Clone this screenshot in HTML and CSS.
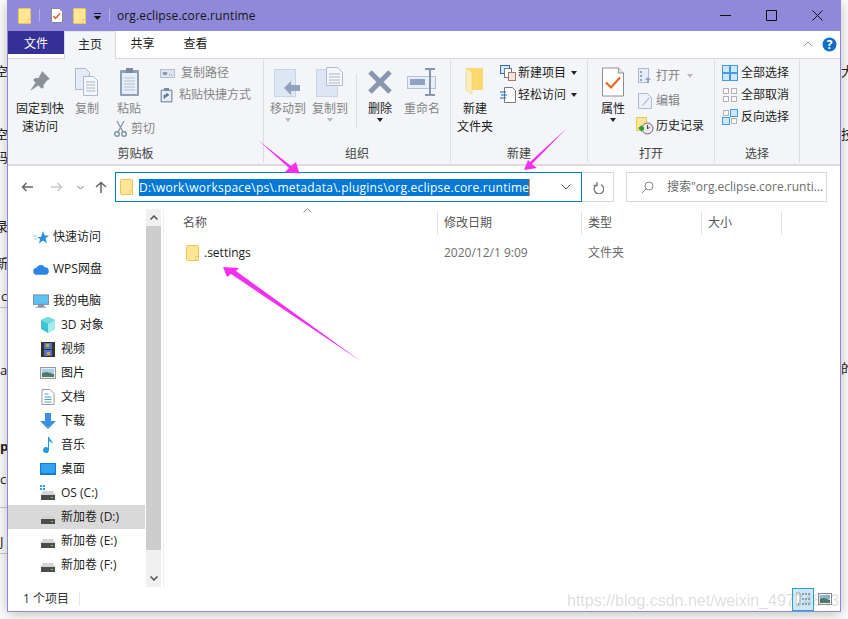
FILE: index.html
```html
<!DOCTYPE html>
<html lang="zh-CN">
<head>
  <meta charset="UTF-8">
  <title>org.eclipse.core.runtime</title>
  <link rel="stylesheet" href="styles.css">
</head>
<body>

<svg class="sprite" width="0" height="0">
  <symbol id="folder" viewBox="0 0 13 16">
    <path d="M.5 1.500a1 1 0 0 1 1-1h10a1 1 0 0 1 1 1v13a1 1 0 0 1-1 1h-10a1 1 0 0 1-1-1z" fill="#ffe596" stroke="#ecc552"/>
    <path d="M10 15.500v-4h2.500v4z" fill="#fff3c4" stroke="#ecc552"/>
  </symbol>
  <symbol id="drive" viewBox="0 0 16 16">
    <path d="M3 6h10l2 4H1z" fill="#d4d4d4"/>
    <rect x="1" y="10" width="14" height="5" fill="#4d4d4d"/>
    <rect x="11" y="12" width="2" height="1" fill="#5fe05f"/>
  </symbol>
</svg>

<!-- bits of the page behind the explorer window -->
<div class="backdrop">
  <span class="bit" style="left:-5px;top:62px">空</span>
  <span class="bit" style="left:-5px;top:125px">空</span>
  <span class="bit" style="left:-5px;top:148px">码</span>
  <span class="bit" style="left:-5px;top:217px">录</span>
  <span class="bit" style="left:-5px;top:254px">新</span>
  <span class="bit" style="left:1px;top:287px">c</span>
  <span class="bit" style="left:0;top:361px">a</span>
  <span class="bit bit-bold" style="left:0;top:437px">p</span>
  <span class="bit" style="left:0;top:470px">ce</span>
  <span class="bit" style="left:0;top:532px">J</span>
  <span class="bit" style="left:841px;top:62px">大</span>
  <span class="bit" style="left:841px;top:125px">技</span>
  <span class="bit" style="left:841px;top:359px">的</span>
  <i class="rule" style="top:307px"></i>
  <i class="rule" style="top:507px"></i>
  <i class="rule" style="top:553px"></i>
</div>

<div class="window">

  <div class="titlebar">
    <svg class="qa-icon" width="13" height="16"><use href="#folder"/></svg>
    <i class="qa-sep"></i>
    <svg class="qa-doc" width="12" height="15" viewBox="0 0 12 15">
      <path d="M.5.500h8l3 3v11H.5z" fill="#fff" stroke="#8a8a8a"/>
      <path d="M2.500 8l2 2.500 4.500-5" fill="none" stroke="#e8562a" stroke-width="1.400"/>
    </svg>
    <svg class="qa-folder" width="13" height="16"><use href="#folder"/></svg>
    <svg class="qa-drop" width="9" height="8" viewBox="0 0 9 8">
      <path d="M1 0h7v1H1zM1 3h7L4.500 7z" fill="#111"/>
    </svg>
    <i class="qa-sep"></i>
    <span class="title-text">org.eclipse.core.runtime</span>
    <div class="win-btns">
      <svg width="11" height="11" viewBox="0 0 11 11"><path d="M0 5.500h11" stroke="#111"/></svg>
      <svg width="11" height="11" viewBox="0 0 11 11"><path d="M.5.500h10v10H.5z" fill="none" stroke="#111"/></svg>
      <svg width="11" height="11" viewBox="0 0 11 11"><path d="M.5.500l10 10M10.500.500l-10 10" stroke="#111"/></svg>
    </div>
  </div>

  <div class="tabs">
    <span class="tab tab-file">文件</span>
    <span class="tab tab-active">主页</span>
    <span class="tab">共享</span>
    <span class="tab">查看</span>
    <svg class="tabs-fold" width="10" height="6" viewBox="0 0 10 6"><path d="M1 5l4-4 4 4" fill="none" stroke="#9b9b9b"/></svg>
    <svg class="tabs-help" width="15" height="15" viewBox="0 0 15 15">
      <circle cx="7.500" cy="7.500" r="7" fill="#1170c6"/>
      <text x="7.500" y="12" class="help-mark">?</text>
    </svg>
  </div>

  <div class="ribbon">

    <div class="group group-clip">
      <div class="group-body">
        <div class="big big-pin">
          <svg width="24" height="30" viewBox="0 0 24 30">
            <path d="M14 4l8 8-2.500 1-4 5v3l-2 .5L5 13l2.500-2h3L13 6.500z" fill="#8b9198"/>
            <path d="M8 15l-6 9 9-6z" fill="#8b9198"/>
          </svg>
          <span class="label dark">固定到快<br>速访问</span>
        </div>
        <div class="big big-copy off">
          <svg width="26" height="30" viewBox="0 0 26 30">
            <path d="M1.500 1.500h10l4 4v17h-14z" fill="#e6ecf5" stroke="#a9bad2"/>
            <path d="M9.500 9.500h10l4 4v15h-14z" fill="#f5f7fb" stroke="#a9bad2"/>
            <path d="M12 15h9M12 18h9M12 21h9M12 24h9" stroke="#a9b4c4"/>
          </svg>
          <span class="label">复制</span>
        </div>
        <div class="clip-col">
          <div class="big big-paste off">
            <svg width="21" height="30" viewBox="0 0 21 30">
              <rect x="1" y="3" width="19" height="26" rx="1" fill="#8fa0b6"/>
              <rect x="3" y="6" width="15" height="21" fill="#e8eef7"/>
              <rect x="7" y="1" width="7" height="5" fill="#7b8a9e"/>
              <path d="M5 11h11M5 14h11M5 17h11M5 20h11M5 23h11" stroke="#b5c2d3"/>
            </svg>
            <span class="label">粘贴</span>
          </div>
          <div class="small off small-cut">
            <svg width="13" height="16" viewBox="0 0 13 16">
              <path d="M3 0l6 11M10 0L4 11" stroke="#8a97a8" stroke-width="1.300" fill="none"/>
              <circle cx="3" cy="13" r="2.300" fill="none" stroke="#7f93ad" stroke-width="1.400"/>
              <circle cx="10" cy="13" r="2.300" fill="none" stroke="#7f93ad" stroke-width="1.400"/>
            </svg>
            <span>剪切</span>
          </div>
        </div>
        <div class="small-col small-col-clip">
          <div class="small off">
            <svg width="15" height="9" viewBox="0 0 15 9">
              <rect x=".5" y=".5" width="14" height="8" fill="#dfe6f2" stroke="#b4c0d2"/>
              <path d="M3 3l1 3 1-3 1 3 1-3M9 6h1M11 6h1" stroke="#66788f" fill="none" stroke-width=".8"/>
            </svg>
            <span>复制路径</span>
          </div>
          <div class="small off">
            <svg width="13" height="16" viewBox="0 0 13 16">
              <rect x=".5" y="2.500" width="12" height="13" rx="1" fill="#8d9fb6"/>
              <rect x="2" y="4" width="9" height="10" fill="#e9eef6"/>
              <rect x="4" y="1" width="5" height="3" fill="#7b8a9e"/>
              <path d="M4 12V8h4M6 6l3 2-3 2" fill="#5d7391" stroke="#5d7391" stroke-width=".6"/>
            </svg>
            <span>粘贴快捷方式</span>
          </div>
        </div>
      </div>
      <div class="group-label">剪贴板</div>
    </div>

    <div class="group group-org">
      <div class="group-body">
        <div class="big big-org off">
          <svg width="28" height="30" viewBox="0 0 28 30">
            <rect x=".5" y="2.500" width="21" height="27" fill="#dde6f3" stroke="#c8d5e8"/>
            <path d="M10 21l7-7v4h9v6h-9v4z" fill="#90a3bd"/>
          </svg>
          <span class="label">移动到</span>
          <i class="caret caret-off"></i>
        </div>
        <div class="big big-org off">
          <svg width="28" height="30" viewBox="0 0 28 30">
            <rect x=".5" y="2.500" width="21" height="27" fill="#dde6f3" stroke="#c8d5e8"/>
            <path d="M10.500.500h11l5 5v13h-16z" fill="#f5f7fb" stroke="#a9bad2"/>
            <path d="M13 7h11M13 10h11M13 13h11M13 16h11" stroke="#a9b4c4"/>
          </svg>
          <span class="label">复制到</span>
          <i class="caret caret-off"></i>
        </div>
        <i class="inner-sep"></i>
        <div class="big big-del">
          <svg width="26" height="26" viewBox="0 0 26 26">
            <path d="M3 3l20 20M23 3L3 23" stroke="#8896ad" stroke-width="5"/>
          </svg>
          <span class="label dark">删除</span>
          <i class="caret"></i>
        </div>
        <div class="big big-rename off">
          <svg width="30" height="28" viewBox="0 0 30 28">
            <rect x=".5" y="8.500" width="28" height="12" fill="#e8eef7" stroke="#b2c1d8"/>
            <rect x="3" y="11" width="15" height="6" fill="#8fa2bf"/>
            <path d="M18 1h4l1 1 1-1h4M23 2v24M18 27h4l1-1 1 1h4" fill="none" stroke="#8795ad" stroke-width="2"/>
          </svg>
          <span class="label">重命名</span>
        </div>
      </div>
      <div class="group-label">组织</div>
    </div>

    <div class="group group-new">
      <div class="group-body">
        <div class="big big-newfolder">
          <svg width="20" height="30" viewBox="0 0 20 30">
            <path d="M1 1h17v22H1z" fill="#fbd96f"/>
            <path d="M1 1l6 4v22l-6-4z" fill="#fff0ba" stroke="#efd27a" stroke-width=".6"/>
          </svg>
          <span class="label dark">新建<br>文件夹</span>
        </div>
        <div class="small-col small-col-new">
          <div class="small">
            <svg width="16" height="16" viewBox="0 0 16 16">
              <rect x=".5" y=".5" width="9" height="8" fill="#dbe8f6" stroke="#2a6fb8"/>
              <rect x="4.500" y="3.500" width="7" height="9" fill="#fff" stroke="#6d7c8f"/>
              <rect x="8.500" y="7.500" width="7" height="8" fill="#f6e3da" stroke="#a07b6b"/>
            </svg>
            <span>新建项目</span>
            <i class="caret caret-side"></i>
          </div>
          <div class="small">
            <svg width="16" height="16" viewBox="0 0 16 16">
              <path d="M4.500.5h8l3 3v12h-11z" fill="#fff" stroke="#7b7b7b"/>
              <path d="M0 5h6M1 8h6M0 11h6" stroke="#1268bc" stroke-width="1.200"/>
            </svg>
            <span>轻松访问</span>
            <i class="caret caret-side"></i>
          </div>
        </div>
      </div>
      <div class="group-label">新建</div>
    </div>

    <div class="group group-open">
      <div class="group-body">
        <div class="big big-prop">
          <svg width="22" height="29" viewBox="0 0 22 29">
            <path d="M.5.500h16l5 5v23H.5z" fill="#fff" stroke="#8e8e8e"/>
            <path d="M16.500.500v5h5" fill="#e5e5e5" stroke="#8e8e8e"/>
            <path d="M4 15l5 5 9-10" fill="none" stroke="#f0641e" stroke-width="2.200"/>
          </svg>
          <span class="label dark">属性</span>
          <i class="caret"></i>
        </div>
        <div class="open-col">
          <div class="small off">
            <svg width="14" height="16" viewBox="0 0 14 16">
              <rect x=".5" y=".5" width="10" height="14" fill="#e7edf6" stroke="#a9bad2"/>
              <path d="M2 3h2v2H2zM2 7h2v2H2zM2 11h2v2H2z" fill="#8fa2bf"/>
              <path d="M10 9l-3 3h2v3h2v-3h2z" fill="#8fa2bf"/>
            </svg>
            <span>打开</span>
            <i class="caret caret-side caret-off"></i>
          </div>
          <div class="small off">
            <svg width="14" height="16" viewBox="0 0 14 16">
              <path d="M.5.500h9l4 4v11H.5z" fill="#eef2f8" stroke="#a9bad2"/>
              <path d="M4 12l7-8 1 1-7 8z" fill="#b6c5da"/>
            </svg>
            <span>编辑</span>
          </div>
          <div class="small small-hist">
            <svg width="18" height="18" viewBox="0 0 18 18">
              <path d="M.5.500h10v13H.5z" fill="#ffe596" stroke="#ecc552"/>
              <circle cx="11.500" cy="11.500" r="5.500" fill="#e8e8e8" stroke="#666"/>
              <path d="M11.500 8v4l2-2" fill="none" stroke="#444"/>
              <path d="M2 11l4-3v2h2v3H6v2z" fill="#2e9e3a"/>
            </svg>
            <span>历史记录</span>
          </div>
        </div>
      </div>
      <div class="group-label">打开</div>
    </div>

    <div class="group group-select">
      <div class="group-body">
        <div class="small-col small-col-select">
          <div class="small">
            <svg width="16" height="16" viewBox="0 0 16 16">
              <rect x=".5" y=".5" width="15" height="15" fill="#cfe6fb" stroke="#3f9ce8"/>
              <path d="M8 0v16M0 8h16" stroke="#3f9ce8" stroke-width="2"/>
            </svg>
            <span>全部选择</span>
          </div>
          <div class="small">
            <svg width="16" height="16" viewBox="0 0 16 16" fill="#fafafa" stroke="#b4b4b4">
              <rect x="1.500" y="1.500" width="5" height="5"/><rect x="9.500" y="1.500" width="5" height="5"/>
              <rect x="1.500" y="9.500" width="5" height="5"/><rect x="9.500" y="9.500" width="5" height="5"/>
            </svg>
            <span>全部取消</span>
          </div>
          <div class="small">
            <svg width="16" height="16" viewBox="0 0 16 16">
              <rect x="1.500" y="1.500" width="5" height="5" fill="#fafafa" stroke="#b4b4b4"/>
              <rect x="8.500" y=".5" width="7" height="7" fill="#cfe6fb" stroke="#3f9ce8"/>
              <rect x=".5" y="8.500" width="7" height="7" fill="#cfe6fb" stroke="#3f9ce8"/>
              <rect x="9.500" y="9.500" width="5" height="5" fill="#fafafa" stroke="#b4b4b4"/>
            </svg>
            <span>反向选择</span>
          </div>
        </div>
      </div>
      <div class="group-label">选择</div>
    </div>

  </div>

  <div class="addressbar">
    <svg class="nav-back" width="12" height="10" viewBox="0 0 12 10"><path d="M12 5H1.500M5.500 1l-4 4 4 4" fill="none" stroke="#666" stroke-width="1.500"/></svg>
    <svg class="nav-forward" width="12" height="10" viewBox="0 0 12 10"><path d="M0 5h10.500M6.500 1l4 4-4 4" fill="none" stroke="#c9c9c9" stroke-width="1.500"/></svg>
    <svg class="nav-recent" width="7" height="5" viewBox="0 0 7 5"><path d="M.5 1l3 3 3-3" fill="none" stroke="#777"/></svg>
    <svg class="nav-up" width="12" height="12" viewBox="0 0 12 12"><path d="M6 12V1.500M1 6l5-4.500L11 6" fill="none" stroke="#666" stroke-width="1.500"/></svg>
    <div class="address">
      <svg width="13" height="16"><use href="#folder"/></svg>
      <span class="address-text">D:\work\workspace\ps\.metadata\.plugins\org.eclipse.core.runtime</span>
      <svg class="address-drop" width="10" height="6" viewBox="0 0 10 6"><path d="M.5.500L5 5 9.500.500" fill="none" stroke="#555"/></svg>
    </div>
    <div class="refresh">
      <svg width="12" height="13" viewBox="0 0 12 13"><path d="M8 3.200a4.800 4.800 0 1 1-4.500.2M4 .5v3.500H.5" transform="translate(1 .5)" fill="none" stroke="#777" stroke-width="1.300"/></svg>
    </div>
    <div class="search">
      <svg width="13" height="13" viewBox="0 0 13 13"><circle cx="8" cy="5" r="4" fill="none" stroke="#888"/><path d="M5 8l-4 4" stroke="#888"/></svg>
      <span>搜索"org.eclipse.core.runti...</span>
    </div>
  </div>

  <div class="main">
    <div class="sidebar">
      <div class="tree">
        <div class="tree-row tree-top">
          <svg width="16" height="15" viewBox="0 0 16 15"><path d="M10 1l1.500 4.500H16l-3.500 3 1.500 5-4-3-4 3 1-4.500-3-2h4z" fill="#2c8fe0"/><path d="M0 6h4M1 9h3" stroke="#9cc8ee"/></svg>
          <span>快速访问</span>
        </div>
        <div class="tree-row tree-top tree-wps">
          <svg width="17" height="13" viewBox="0 0 17 13"><path d="M4 12a3.500 3.500 0 0 1-.5-7A5 5 0 0 1 12.500 4 4 4 0 0 1 13 12z" fill="#2c85e6"/></svg>
          <span>WPS网盘</span>
        </div>
        <div class="tree-row tree-top tree-pc">
          <svg width="17" height="15" viewBox="0 0 17 15"><rect x=".5" y=".5" width="16" height="10" fill="#5cc2f5" stroke="#7d8a96"/><path d="M6 11h5v2H6zM3 13.500h11" stroke="#7d8a96" fill="#9aa6b0"/></svg>
          <span>我的电脑</span>
        </div>
        <div class="tree-row">
          <svg width="16" height="16" viewBox="0 0 16 16"><path d="M8 0l7 3v9l-7 4-7-4V3z" fill="#3fc4cf"/><path d="M8 7l7-4v9l-7 4z" fill="#a5ecef"/><path d="M8 7L1 3l7-3 7 3z" fill="#74dbe2"/></svg>
          <span>3D 对象</span>
        </div>
        <div class="tree-row">
          <svg width="14" height="15" viewBox="0 0 14 15"><rect width="14" height="15" fill="#333"/><rect x="3" y="1" width="8" height="6" fill="#4f74c9"/><rect x="3" y="8" width="8" height="6" fill="#4f74c9"/><path d="M5 2h3v3H5zM6 10h3v3H6z" fill="#d9a52a"/></svg>
          <span>视频</span>
        </div>
        <div class="tree-row">
          <svg width="16" height="12" viewBox="0 0 16 12"><rect x=".5" y=".5" width="15" height="11" fill="#e8eef2" stroke="#9a9a9a"/><path d="M2 2h12v4H2z" fill="#a9cfe6"/><path d="M2 6l5-1 7 2v3H2z" fill="#4f7b6a"/></svg>
          <span>图片</span>
        </div>
        <div class="tree-row">
          <svg width="13" height="16" viewBox="0 0 13 16"><path d="M.5.500h8l4 4v11H.5z" fill="#fff" stroke="#9a9a9a"/><path d="M3 5h4M3 8h7M3 10.500h7M3 13h7" stroke="#4d9ad6"/></svg>
          <span>文档</span>
        </div>
        <div class="tree-row">
          <svg width="16" height="16" viewBox="0 0 16 16"><path d="M5 0h6v8h5l-8 8-8-8h5z" fill="#3d8ee0"/></svg>
          <span>下载</span>
        </div>
        <div class="tree-row">
          <svg width="16" height="16" viewBox="0 0 16 16"><path d="M8 0h1.200c.3 3 3.800 3.500 3.300 7-.8-2-2.500-2.500-3.500-2.800V13a3 3 0 1 1-1-2.200z" fill="#1d9be6"/></svg>
          <span>音乐</span>
        </div>
        <div class="tree-row">
          <svg width="16" height="12" viewBox="0 0 16 12"><rect width="16" height="12" fill="#1878d0"/><path d="M1 1h14v9H1z" fill="#2fa3ee"/></svg>
          <span>桌面</span>
        </div>
        <div class="tree-row">
          <svg width="16" height="16" viewBox="0 0 16 16">
            <path d="M0 0h2v2H0zM3 0h2v2H3zM0 3h2v2H0zM3 3h2v2H3z" fill="#1da1f2"/>
            <use href="#drive"/>
          </svg>
          <span>OS (C:)</span>
        </div>
        <div class="tree-row tree-selected">
          <svg width="16" height="16"><use href="#drive"/></svg>
          <span>新加卷 (D:)</span>
        </div>
        <div class="tree-row">
          <svg width="16" height="16"><use href="#drive"/></svg>
          <span>新加卷 (E:)</span>
        </div>
        <div class="tree-row">
          <svg width="16" height="16"><use href="#drive"/></svg>
          <span>新加卷 (F:)</span>
        </div>
      </div>
      <div class="scrollbar">
        <div class="scroll-btn"><svg width="8" height="5" viewBox="0 0 8 5"><path d="M.5 4.500L4 1l3.500 3.500" fill="none" stroke="#505050" stroke-width="1.500"/></svg></div>
        <div class="scroll-thumb"></div>
        <div class="scroll-track"></div>
        <div class="scroll-btn"><svg width="8" height="5" viewBox="0 0 8 5"><path d="M.5.500L4 4 7.500.500" fill="none" stroke="#505050" stroke-width="1.500"/></svg></div>
      </div>
    </div>

    <div class="files">
      <svg class="sort-mark" width="9" height="5" viewBox="0 0 9 5"><path d="M.5 4.500l4-4 4 4" fill="none" stroke="#888"/></svg>
      <div class="file-head">
        <span class="col col-name">名称</span>
        <span class="col col-date">修改日期</span>
        <span class="col col-type">类型</span>
        <span class="col col-size">大小</span>
      </div>
      <div class="file-row">
        <span class="col col-name file-name">
          <svg width="13" height="16"><use href="#folder"/></svg>
          .settings
        </span>
        <span class="col col-date">2020/12/1 9:09</span>
        <span class="col col-type">文件夹</span>
        <span class="col col-size"></span>
      </div>
    </div>
  </div>

  <div class="statusbar">
    <span class="status-count">1 个项目</span>
    <i class="status-sep"></i>
    <div class="view-btns">
      <div class="view-btn view-on">
        <svg width="15" height="14" viewBox="0 0 15 14">
          <path d="M0 1h4v12H0z" fill="#fff" stroke="#777" stroke-width=".6"/>
          <path d="M2 11h1v1H2z" fill="#d12a2a"/>
          <path d="M6 2h9M6 7h9M6 12h9" stroke="#555" stroke-dasharray="2 1"/>
        </svg>
      </div>
      <div class="view-btn">
        <svg width="14" height="12" viewBox="0 0 14 12">
          <rect x=".5" y=".5" width="13" height="11" fill="#f4f6f8" stroke="#888"/>
          <path d="M2 2h10v4H2z" fill="#8ab6d8"/>
          <path d="M2 6l4-1 6 2v3H2z" fill="#46705e"/>
        </svg>
      </div>
    </div>
  </div>

</div>

<span class="watermark">https://blog.csdn.net/weixin_49774843</span>

<svg class="arrows" width="848" height="619" viewBox="0 0 848 619">
  <path d="M258 140L291 166 296 162 299.500 173.500 285 172 289 168z"/>
  <path d="M567 128L532 164 537 168 524 170 528 160 530 162z"/>
  <path d="M362 362L236 271 239 268 223 267 227 277 231 274z"/>
</svg>

</body>
</html>
```

FILE: styles.css
```css
* {
  box-sizing: border-box;
}

html, body {
  margin: 0;
  height: 100%;
  overflow: hidden;
}

body {
  position: relative;
  background-color: #fff;
  font-family: "Open Sans", "Noto Sans CJK SC", sans-serif;
  font-size: 12px;
  line-height: 18px;
  color: #1c1c1c;
}

svg {
  display: block;
  flex: none;
}

i {
  display: block;
  font-style: normal;
}

.sprite {
  position: absolute;
}

/* page behind the window */
.bit {
  position: absolute;
  font-size: 13px;
  color: #222;
}

.bit-bold {
  font-weight: bold;
}

.rule {
  position: absolute;
  left: 0;
  width: 8px;
  height: 1px;
  background-color: #ccc;
}

.window {
  position: absolute;
  left: 7px;
  top: 0;
  width: 834px;
  height: 612px;
  display: flex;
  flex-direction: column;
  background-color: #fff;
  border: 1px solid #8e89d8;
  border-top: 0;
  box-shadow: 0 2px 14px rgba(0, 0, 0, 0.28);
}

/* title bar */
.titlebar {
  height: 31px;
  flex: none;
  display: flex;
  align-items: center;
  background-color: #8e89d8;
  padding-left: 10px;
}

.qa-icon {
  margin-right: 8px;
}

.qa-sep {
  width: 1px;
  height: 13px;
  background-color: #b4b1e4;
}

.qa-doc {
  margin-left: 11px;
}

.qa-folder {
  margin-left: 10px;
}

.qa-drop {
  margin: 2px 7px 0 7px;
}

.title-text {
  margin-left: 7px;
  color: #161616;
  letter-spacing: 0.12px;
}

.win-btns {
  margin-left: auto;
  display: flex;
  gap: 35px;
  padding-right: 17px;
}

/* tabs */
.tabs {
  height: 27px;
  flex: none;
  display: flex;
  align-items: flex-start;
  position: relative;
}

.tab {
  width: 67px;
  height: 23px;
  text-align: center;
  line-height: 25px;
  color: #222;
}

.tab + .tab {
  margin-left: -14px;
}

.tab-file {
  width: 56px;
  background-color: #353197;
  color: #fff;
}

.tab-active {
  width: 52px;
  height: 28px;
  margin-left: 0 !important;
  margin-right: 7px;
  border: 1px solid #d9d9d9;
  border-top-color: #e6e6e6;
  border-bottom: 0;
  background-color: #f3f5f8;
  position: relative;
  z-index: 1;
}

.tabs-fold {
  margin: 10px 0 0 auto;
}

.tabs-help {
  margin: 6px 3px 0 9px;
}

.help-mark {
  font-size: 12px;
  font-weight: bold;
  fill: #fff;
  text-anchor: middle;
}

/* ribbon */
.ribbon {
  height: 108px;
  flex: none;
  display: flex;
  background-color: #f3f5f8;
  border-top: 1px solid #d9d9d9;
  border-bottom: 2px solid #dadbdd;
  padding: 1px 0 2px;
}

.group {
  display: flex;
  flex-direction: column;
  border-right: 1px solid #dcdee1;
}

.group-body {
  flex: 1;
  display: flex;
  min-height: 0;
}

.group-label {
  height: 20px;
  flex: none;
  text-align: center;
  color: #444;
  line-height: 24px;
}

.group-clip {
  width: 256px;
}

.group-org {
  width: 187px;
}

.group-new {
  width: 137px;
}

.group-open {
  width: 127px;
}

.group-select {
  width: 85px;
}

.big {
  display: flex;
  flex-direction: column;
  align-items: center;
  padding-top: 7px;
}

.big svg {
  height: 30px;
}

.label {
  display: block;
  margin-top: 3px;
  text-align: center;
  color: #858585;
  line-height: 18px;
  white-space: nowrap;
}

.label.dark {
  color: #1c1c1c;
}

.big-pin {
  width: 48px;
  margin-left: 8px;
}

.big-copy {
  width: 30px;
  margin-left: 8px;
}

.clip-col {
  margin-left: 12px;
  width: 48px;
}

.big-paste {
  width: 30px;
}

.small {
  display: flex;
  align-items: center;
  gap: 4px;
  height: 22px;
  color: #1c1c1c;
  white-space: nowrap;
}

.small.off {
  color: #858585;
}

.small-cut {
  height: 20px;
  margin-top: 1px;
  gap: 4px;
}

.small-col {
  display: flex;
  flex-direction: column;
}

.small-col-clip {
  margin-left: -2px;
  padding-top: 2px;
}

.small-col-clip .small {
  width: 92px;
}

.small-col-clip svg {
  margin: 0 2px 0 0;
}

.big-org {
  width: 36px;
}

.big-org:first-child {
  margin-left: 6px;
  margin-right: 6px;
}

.inner-sep {
  width: 1px;
  height: 54px;
  margin: 14px 10px 0 8px;
  background-color: #dcdee1;
}

.big-del {
  width: 26px;
}

.big-del svg {
  height: 26px;
  margin-top: 2px;
  margin-bottom: 2px;
}

.big-rename {
  width: 36px;
  margin-left: 11px;
}

.caret {
  width: 0;
  height: 0;
  border-left: 3.500px solid transparent;
  border-right: 3.500px solid transparent;
  border-top: 4px solid #222;
}

.caret-off {
  border-top-color: #b9b9b9;
}

.caret-side {
  margin: 0 0 0 3px;
}

.big-newfolder {
  width: 38px;
  margin-left: 5px;
}

.small-col-new {
  margin-left: 6px;
  padding-top: 2px;
}

.small-col-new .small {
  gap: 2px;
}

.big-prop {
  width: 30px;
  margin-left: 10px;
}

.open-col {
  margin-left: 10px;
  padding-top: 3px;
}

.open-col .small {
  height: 25px;
  gap: 4px;
}

.small-hist {
  gap: 2px !important;
  margin-left: -2px;
}

.small-col-select {
  margin-left: 7px;
  padding-top: 2px;
}

.small-col-select .small {
  gap: 3px;
}

/* address bar */
.addressbar {
  height: 42px;
  flex: none;
  display: flex;
  align-items: center;
  padding: 0 13px 0 13px;
}

.nav-forward {
  margin-left: 18px;
}

.nav-recent {
  margin-left: 14px;
}

.nav-up {
  margin-left: 11px;
}

.address {
  width: 467px;
  height: 30px;
  margin-left: 8px;
  display: flex;
  align-items: center;
  padding: 0 10px 0 4px;
  border: 1px solid #0078d7;
}

.address-text {
  margin-left: 6px;
  background-color: #0078d7;
  color: #fff;
  white-space: nowrap;
  line-height: 17px;
  letter-spacing: 0.235px;
  border-right: 1px solid #f28a2e;
}

.address-drop {
  margin-left: auto;
}

.refresh {
  width: 32px;
  height: 30px;
  display: flex;
  align-items: center;
  justify-content: center;
  border: 1px solid #d9d9d9;
  border-left: 0;
}

.search {
  flex: 1;
  height: 30px;
  margin-left: 12px;
  display: flex;
  align-items: center;
  gap: 13px;
  padding-left: 14px;
  border: 1px solid #d9d9d9;
  color: #6d6d6d;
  white-space: nowrap;
  overflow: hidden;
}

/* main area */
.main {
  flex: 1;
  min-height: 0;
  display: flex;
}

.sidebar {
  width: 156px;
  flex: none;
  display: flex;
  border-right: 1px solid #f0f0f0;
}

.tree {
  width: 137px;
  padding-top: 17px;
}

.tree-row {
  height: 24px;
  display: flex;
  align-items: center;
  gap: 5px;
  padding-left: 32px;
  color: #222;
  white-space: nowrap;
}

.tree-row svg {
  width: 16px;
}

.tree-top {
  padding-left: 25px;
  gap: 4px;
}

.tree-wps {
  margin-top: 8px;
}

.tree-pc {
  margin-top: 8px;
}

.tree-selected {
  background-color: #d9d9d9;
}

.scrollbar {
  width: 15px;
  margin-left: 1px;
  display: flex;
  flex-direction: column;
  background-color: #f0f0f0;
  margin-top: 1px;
}

.scroll-btn {
  height: 17px;
  flex: none;
  display: flex;
  align-items: center;
  justify-content: center;
}

.scroll-thumb {
  height: 324px;
  flex: none;
  background-color: #cdcdcd;
}

.scroll-track {
  flex: 1;
}

.files {
  flex: 1;
  position: relative;
  padding-left: 13px;
}

.sort-mark {
  position: absolute;
  left: 139px;
  top: 0;
}

.file-head {
  height: 28px;
  display: flex;
  align-items: center;
  padding-top: 2px;
  color: #555;
}

.file-row {
  height: 24px;
  display: flex;
  align-items: center;
  margin-top: 5px;
  color: #6d6d6d;
}

.col {
  height: 24px;
  line-height: 24px;
  padding-left: 6px;
  flex: none;
}

.file-head .col {
  border-right: 1px solid #e5e5e5;
}

.col-name {
  width: 261px;
}

.col-date {
  width: 144px;
}

.col-type {
  width: 120px;
}

.col-size {
  width: 80px;
}

.file-name {
  display: flex;
  align-items: center;
  gap: 5px;
  padding-left: 9px;
  color: #1c1c1c;
}

/* status bar */
.statusbar {
  height: 24px;
  flex: none;
  display: flex;
  align-items: center;
  padding-left: 15px;
  color: #333;
}

.status-sep {
  width: 1px;
  height: 14px;
  margin-left: 10px;
  background-color: #e8e8e8;
}

.view-btns {
  margin-left: auto;
  display: flex;
  padding-right: 5px;
}

.view-btn {
  width: 21px;
  height: 23px;
  display: flex;
  align-items: center;
  justify-content: center;
}

.view-on {
  width: 22px;
  border: 1px solid #26a0da;
  background-color: #cbe8f6;
}

/* overlays */
.watermark {
  position: absolute;
  left: 567px;
  top: 590px;
  font-family: "Liberation Sans", sans-serif;
  font-size: 16px;
  line-height: 22px;
  color: rgba(150, 150, 150, 0.32);
  white-space: nowrap;
}

.arrows {
  position: absolute;
  left: 0;
  top: 0;
  fill: #f52ff0;
  pointer-events: none;
}
```
